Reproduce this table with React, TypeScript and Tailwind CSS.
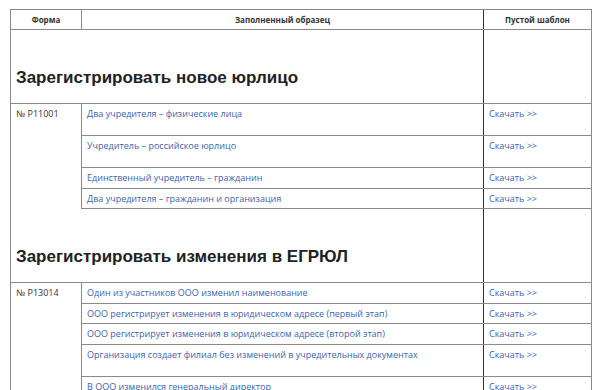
const font = { fontFamily: '"Open Sans", "Liberation Sans", sans-serif' };
const headFont = { fontFamily: '"Liberation Sans", Arial, sans-serif' };

type Row = { text: string; tall?: boolean };

const groups: { title: string; form: string; rows: Row[] }[] = [
  {
    title: "Зарегистрировать новое юрлицо",
    form: "№ Р11001",
    rows: [
      { text: "Два учредителя – физические лица", tall: true },
      { text: "Учредитель – российское юрлицо", tall: true },
      { text: "Единственный учредитель – гражданин" },
      { text: "Два учредителя – гражданин и организация" },
    ],
  },
  {
    title: "Зарегистрировать изменения в ЕГРЮЛ",
    form: "№ Р13014",
    rows: [
      { text: "Один из участников ООО изменил наименование" },
      { text: "ООО регистрирует изменения в юридическом адресе (первый этап)" },
      { text: "ООО регистрирует изменения в юридическом адресе (второй этап)" },
      { text: "Организация создает филиал без изменений в учредительных документах", tall: true },
      { text: "В ООО изменился генеральный директор", tall: true },
    ],
  },
];

function Section({ title, form, rows }: { title: string; form: string; rows: Row[] }) {
  return (
    <>
      {/* heading row */}
      <div className="flex h-[74px] border-b border-[#8a8a8a]">
        <div className="flex flex-1 items-end pb-[17px] pl-[5px]">
          <h2 className="text-[17px] font-bold leading-none text-[#222]" style={headFont}>
            {title}
          </h2>
        </div>
        <div className="w-[108px] border-l border-[#333]" />
      </div>
      {/* rows */}
      <div className="flex">
        <div className="w-[71px] shrink-0 border-r border-[#8a8a8a] pl-[5px] pt-[4px] text-[9px] leading-[11px] text-[#333]">
          {form}
        </div>
        <div className="flex flex-1 flex-col">
          {rows.map((r, i) => (
            <div key={i} className={`flex border-b border-[#8a8a8a] ${r.tall ? "h-[32px]" : "h-[20.5px]"}`}>
              <div className="flex-1 pl-[5px] pt-[4px] text-[9px] leading-[11px] text-[#3d63ad]">{r.text}</div>
              <div className="w-[108px] border-l border-[#333] pl-[5px] pt-[4px] text-[9px] leading-[11px] text-[#3d63ad]">
                Скачать &gt;&gt;
              </div>
            </div>
          ))}
        </div>
      </div>
    </>
  );
}

export default function App() {
  return (
    <div className="h-[390px] w-[598px] overflow-hidden bg-white" style={font}>
      <div className="ml-[10px] mt-[9px] w-[582px] border border-b-0 border-[#8a8a8a]">
        {/* header */}
        <div className="flex h-[20px] border-b border-[#8a8a8a] text-[8px] font-bold text-[#333]">
          <div className="flex w-[71px] shrink-0 items-center justify-center border-r border-[#8a8a8a]">Форма</div>
          <div className="flex flex-1 items-center justify-center">Заполненный образец</div>
          <div className="flex w-[108px] items-center justify-center border-l border-[#333]">Пустой шаблон</div>
        </div>
        {groups.map((g) => (
          <Section key={g.title} {...g} />
        ))}
      </div>
    </div>
  );
}
